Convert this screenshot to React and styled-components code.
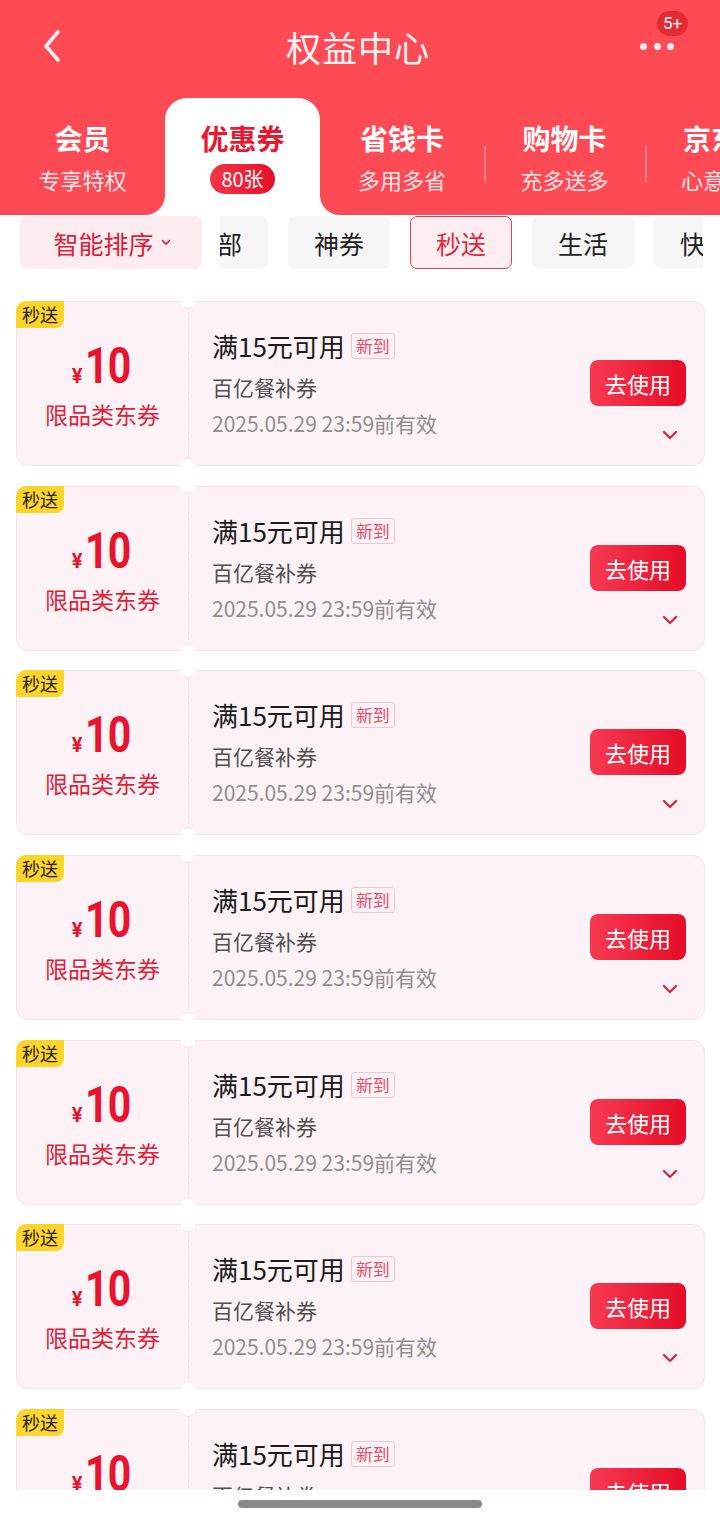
import styled, { createGlobalStyle } from "styled-components";

const GlobalStyle = createGlobalStyle`
  body {
    margin: 0;
    font-family: "Noto Sans CJK SC", "Noto Sans", sans-serif;
    background: #ffffff;
  }
  * { box-sizing: border-box; }
`;

const RED = "#fe4a55";

const Page = styled.div`
  width: 720px;
  height: 1523px;
  display: flex;
  flex-direction: column;
  overflow: hidden;
  background: #ffffff;
`;

const Header = styled.header`
  background: ${RED};
`;

const TopBar = styled.div`
  height: 98px;
  display: grid;
  grid-template-columns: 1fr auto 1fr;
  align-items: center;
  padding: 0 46px 6px 42px;
`;

const BackBtn = styled.div`
  width: 28px;
  height: 36px;
  display: flex;
  align-items: center;
`;

const Title = styled.h1`
  margin: 0;
  font-size: 35px;
  font-weight: 400;
  color: #fff3f3;
  letter-spacing: 1px;
`;

const More = styled.div`
  position: relative;
  justify-self: end;
  width: 34px;
  display: flex;
  justify-content: space-between;
`;

const Dot = styled.span`
  width: 7px;
  height: 7px;
  border-radius: 50%;
  background: #ffe9ec;
`;

const Badge = styled.span`
  position: absolute;
  top: -32px;
  left: 17px;
  height: 25px;
  padding: 0 6px;
  border-radius: 13px;
  background: #e42a33;
  color: #ffffff;
  font-family: "Roboto", sans-serif;
  font-size: 17px;
  line-height: 25px;
`;

const TabRow = styled.nav`
  display: flex;
  height: 117px;
  overflow: hidden;
  background: linear-gradient(to bottom, ${RED} 50%, #ffffff 50%);
`;

const Tab = styled.div`
  position: relative;
  flex: 0 0 ${(p) => p.$w}px;
  display: flex;
  flex-direction: column;
  align-items: center;
  padding-top: 20px;
  background: ${(p) => (p.$active ? "#ffffff" : RED)};
  border-radius: ${(p) =>
    p.$active ? "22px 22px 0 0" : p.$before ? "0 0 20px 0" : p.$after ? "0 0 0 20px" : "0"};
  &::before {
    content: "";
    display: ${(p) => (p.$divider ? "block" : "none")};
    position: absolute;
    left: 0;
    top: 48px;
    width: 2px;
    height: 36px;
    background: rgba(255, 255, 255, 0.28);
  }
`;

const TabTitle = styled.div`
  font-size: 28px;
  font-weight: 700;
  line-height: 40px;
  white-space: nowrap;
  color: ${(p) => (p.$active ? "#e8192f" : "#ffffff")};
`;

const TabSub = styled.div`
  margin-top: 6px;
  font-size: 22px;
  line-height: 30px;
  white-space: nowrap;
  color: #ffe6e8;
`;

const CountPill = styled.div`
  margin-top: 6px;
  height: 30px;
  padding: 0 11px;
  border-radius: 15px;
  background: linear-gradient(90deg, #f43646, #e60f2a);
  color: #ffffff;
  font-size: 20px;
  line-height: 30px;
`;

const FilterRow = styled.div`
  display: flex;
  align-items: center;
  padding: 1px 17px 0 20px;
  height: 54px;
`;

const SortChip = styled.div`
  flex: 0 0 182px;
  height: 53px;
  border-radius: 7px;
  background: #fdecf0;
  color: #dc1c38;
  font-size: 25px;
  display: flex;
  align-items: center;
  justify-content: center;
  gap: 7px;
  padding-left: 2px;
`;

const ChipScroll = styled.div`
  flex: 1;
  margin-left: 18px;
  display: flex;
  gap: 20px;
  overflow: hidden;
`;

const Chip = styled.div`
  flex: 0 0 102px;
  height: 53px;
  border-radius: 7px;
  display: flex;
  align-items: center;
  justify-content: center;
  font-size: 25px;
  margin-left: ${(p) => p.$shift || 0}px;
  color: ${(p) => (p.$active ? "#e0283f" : "#1e1e1e")};
  background: ${(p) => (p.$active ? "#fdeef1" : "#f6f6f6")};
  border: ${(p) => (p.$active ? "1.5px solid #e04050" : "none")};
`;

const List = styled.div`
  flex: 1;
  overflow: hidden;
  padding: 32px 15px 0 16px;
  display: flex;
  flex-direction: column;
  gap: 19.7px;
`;

const Card = styled.div`
  position: relative;
  flex: 0 0 165px;
  display: flex;
  border-radius: 12px;
  background: #fdf3f6;
  border: 1px solid #f6e3e8;
`;

const Tag = styled.span`
  position: absolute;
  top: -1px;
  left: -1px;
  height: 27px;
  padding: 0 6px;
  border-radius: 10px 0 8px 0;
  background: #fdd42a;
  color: #2a2200;
  font-size: 18px;
  line-height: 27px;
`;

const Stub = styled.div`
  position: relative;
  flex: 0 0 172px;
  display: flex;
  flex-direction: column;
  align-items: center;
  padding-top: 39px;
  border-right: 1.5px dashed #f2dde3;
  &::before,
  &::after {
    content: "";
    position: absolute;
    right: -7px;
    width: 12px;
    height: 12px;
    border-radius: 50%;
    background: #ffffff;
  }
  &::before {
    top: -7px;
    border: 1px solid transparent;
    border-bottom-color: #f6e3e8;
  }
  &::after {
    bottom: -7px;
    border: 1px solid transparent;
    border-top-color: #f6e3e8;
  }
`;

const Amount = styled.div`
  display: flex;
  align-items: baseline;
  color: #e8142f;
  line-height: 50px;
  height: 50px;
  margin-right: 4px;
`;

const Yen = styled.span`
  font-family: "Roboto", sans-serif;
  font-size: 20px;
  font-weight: 700;
  margin-right: 3px;
`;

const Value = styled.span`
  display: inline-block;
  width: 44px;
  font-family: "Roboto", sans-serif;
  font-size: 50px;
  font-weight: 700;
  letter-spacing: -1px;
  transform: scaleX(0.82);
  transform-origin: left center;
`;

const Scope = styled.div`
  margin-top: 8px;
  font-size: 23px;
  line-height: 30px;
  color: #e0213a;
`;

const Info = styled.div`
  flex: 1;
  padding: 27px 0 0 23px;
`;

const Cond = styled.div`
  display: flex;
  align-items: center;
  gap: 6px;
  font-size: 26px;
  line-height: 34px;
  color: #1b1b1b;
`;

const NewTag = styled.span`
  height: 26px;
  padding: 0 4px;
  border: 1px solid #f1c6cc;
  border-radius: 3px;
  color: #e4506a;
  font-size: 17px;
  line-height: 24px;
`;

const Sub = styled.div`
  margin-top: 9px;
  font-size: 21px;
  line-height: 30px;
  color: #505050;
`;

const Expire = styled.div`
  margin-top: 6px;
  font-size: 21px;
  line-height: 30px;
  color: #8f8f8f;
`;

const Action = styled.div`
  display: flex;
  flex-direction: column;
  align-items: flex-end;
  padding: 58px 18px 0 0;
`;

const UseBtn = styled.button`
  width: 96px;
  height: 46px;
  border: none;
  border-radius: 8px;
  background: linear-gradient(90deg, #f63a52, #e60c27);
  color: #ffffff;
  font-family: inherit;
  font-size: 22px;
  padding: 0;
`;

const Expand = styled.div`
  margin: 24px 8px 0 0;
  display: flex;
`;

const HomeArea = styled.div`
  flex: 0 0 33px;
  display: flex;
  justify-content: center;
  padding-top: 10px;
  background: #ffffff;
`;

const HomeBar = styled.div`
  width: 244px;
  height: 8px;
  border-radius: 4px;
  background: #8a8a8a;
`;

const tabs = [
  { title: "会员", sub: "专享特权", w: 165 },
  { title: "优惠券", count: "80张", w: 155, active: true },
  { title: "省钱卡", sub: "多用多省", w: 164 },
  { title: "购物卡", sub: "充多送多", w: 161, divider: true },
  { title: "京东卡", sub: "心意好礼", w: 160, divider: true },
];

const chips = ["全部", "神券", "秒送", "生活", "快递"];

const Coupon = () => (
  <Card>
    <Tag>秒送</Tag>
    <Stub>
      <Amount>
        <Yen>¥</Yen>
        <Value>10</Value>
      </Amount>
      <Scope>限品类东券</Scope>
    </Stub>
    <Info>
      <Cond>
        满15元可用<NewTag>新到</NewTag>
      </Cond>
      <Sub>百亿餐补券</Sub>
      <Expire>2025.05.29 23:59前有效</Expire>
    </Info>
    <Action>
      <UseBtn>去使用</UseBtn>
      <Expand>
        <svg width="16" height="10" viewBox="0 0 16 10">
          <path d="M2 2l6 6 6-6" fill="none" stroke="#d8213a" strokeWidth="2.2" strokeLinecap="round" strokeLinejoin="round" />
        </svg>
      </Expand>
    </Action>
  </Card>
);

export default function App() {
  const activeIdx = tabs.findIndex((t) => t.active);
  return (
    <Page>
      <GlobalStyle />
      <Header>
        <TopBar>
          <BackBtn>
            <svg width="20" height="34" viewBox="0 0 20 34">
              <path d="M16 3L4 17l12 14" fill="none" stroke="#ffeef0" strokeWidth="3.6" strokeLinecap="round" strokeLinejoin="round" />
            </svg>
          </BackBtn>
          <Title>权益中心</Title>
          <More>
            <Dot />
            <Dot />
            <Dot />
            <Badge>5+</Badge>
          </More>
        </TopBar>
        <TabRow>
          {tabs.map((t, i) => (
            <Tab
              key={t.title}
              $w={t.w}
              $active={t.active}
              $before={i === activeIdx - 1}
              $after={i === activeIdx + 1}
              $divider={t.divider}
            >
              <TabTitle $active={t.active}>{t.title}</TabTitle>
              {t.count ? <CountPill>{t.count}</CountPill> : <TabSub>{t.sub}</TabSub>}
            </Tab>
          ))}
        </TabRow>
      </Header>
      <FilterRow>
        <SortChip>
          智能排序
          <svg width="10" height="7" viewBox="0 0 10 7">
            <path d="M1.5 1.5l3.5 3.5 3.5-3.5" fill="none" stroke="#dc1c38" strokeWidth="1.6" strokeLinecap="round" />
          </svg>
        </SortChip>
        <ChipScroll>
          {chips.map((c, i) => (
            <Chip key={c} $active={c === "秒送"} $shift={i === 0 ? -54 : 0}>
              {c}
            </Chip>
          ))}
        </ChipScroll>
      </FilterRow>
      <List>
        {Array.from({ length: 7 }).map((_, i) => (
          <Coupon key={i} />
        ))}
      </List>
      <HomeArea>
        <HomeBar />
      </HomeArea>
    </Page>
  );
}
